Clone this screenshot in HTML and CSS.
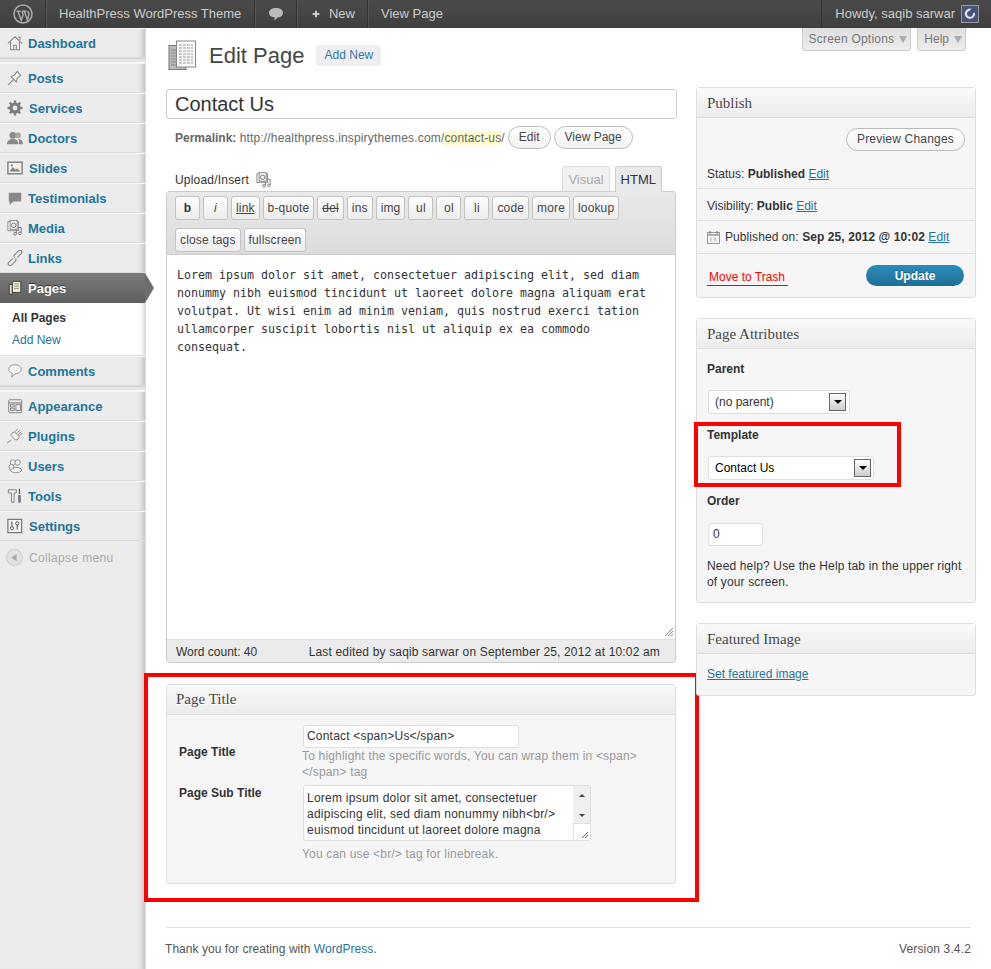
FILE: index.html
```html
<!DOCTYPE html>
<html lang="en">
<head>
<meta charset="utf-8">
<title>Edit Page</title>
<link rel="stylesheet" href="styles.css">
</head>
<body>
<header class="adminbar">
  <div class="ab-item ab-logo">
    <svg width="20" height="20" viewBox="0 0 20 20"><circle cx="10" cy="10" r="9" fill="none" stroke="#aaa" stroke-width="1.6"/><path d="M3.4 7.2h4.2M5 7.2l3.2 9 2-5.6-1.3-3.4M9 7.2h4.6M11.3 7.2l3 8.6 1.6-5c.5-1.6-.6-3-1.6-3" fill="none" stroke="#aaa" stroke-width="1.5"/></svg>
  </div>
  <div class="ab-item ab-site">HealthPress WordPress Theme</div>
  <div class="ab-item ab-icon">
    <svg width="16" height="14" viewBox="0 0 16 14"><path d="M8 1c4 0 7 1.900 7 4.800S12.500 10.500 9.500 10.500c-.8 1.300-2 2.500-3.500 2.700.6-.8.8-1.600.8-2.800C3.500 10.200 1 8.600 1 5.800S4 1 8 1z" fill="#bbb"/></svg>
  </div>
  <div class="ab-item ab-new">
    <svg width="12" height="12" viewBox="0 0 12 12"><path d="M6 1v10M1 6h10" stroke="#ccc" stroke-width="3"/></svg>
    <span>New</span>
  </div>
  <div class="ab-item ab-last">View Page</div>
  <div class="ab-item ab-user">
    <span>Howdy, saqib sarwar</span>
    <span class="avatar"><svg width="16" height="16" viewBox="0 0 16 16"><rect width="16" height="16" fill="#46547c"/><path d="M8 2.500a5.200 5.200 0 1 0 5 4l-2.200 1a2.900 2.900 0 1 1-3.500-2.400L9.500 2.700z" fill="#dfe3ee"/></svg></span>
  </div>
</header>

<div class="shell">
  <nav class="sidebar">
    <a class="item"><svg class="mi" viewBox="0 0 18 18"><path d="M1 9.500 9 2l8 7.500M4 8v8.500h10V8M7.500 16.500v-5h3v5M12.500 2.500h2v3" fill="#f4f4f4" stroke="#888" stroke-width="1.200"/></svg><span>Dashboard</span></a>
    <div class="sep"></div>
    <a class="item"><svg class="mi" viewBox="0 0 18 18"><path d="M1 17l6-6" stroke="#888" stroke-width="1.200"/><path d="M4.500 7.500l6 6 1-4.500 4-3-4-4.500-3 4z" fill="#f4f4f4" stroke="#888" stroke-width="1.200"/></svg><span>Posts</span></a>
    <a class="item"><svg class="mi mi-w" viewBox="0 0 18 18"><circle cx="9" cy="9" r="4.500" fill="none" stroke="#7d7d7d" stroke-width="3.600"/><path d="M9 .6v16.800M.6 9h16.800M3 3l12 12M15 3 3 15" stroke="#7d7d7d" stroke-width="2.600" stroke-dasharray="3 10.800"/></svg><span>Services</span></a>
    <a class="item"><svg class="mi" viewBox="0 0 18 18"><circle cx="6.500" cy="6" r="3.800" fill="#8a8a8a"/><circle cx="12.500" cy="6" r="3.200" fill="#a5a5a5"/><path d="M0 16c0-4.500 3-6 6.500-6s6.500 1.500 6.500 6zM13.500 16H18c0-3.500-2-6-5.500-6 1.200 1.200 1.500 4 1 6z" fill="#8a8a8a"/></svg><span>Doctors</span></a>
    <a class="item"><svg class="mi mi-w" viewBox="0 0 18 18"><rect x="1" y="2.500" width="16" height="13" fill="#f0f0f0" stroke="#808080" stroke-width="1.600"/><path d="M3 13l3.500-5 3 3 2-1.500 3.500 3.500z" fill="#808080"/><circle cx="5.500" cy="6" r="1.300" fill="#808080"/></svg><span>Slides</span></a>
    <a class="item"><svg class="mi" viewBox="0 0 18 18"><path d="M2 3h14v10H7l-4 4v-4H2z" fill="#888"/></svg><span>Testimonials</span></a>
    <a class="item"><svg class="mi" viewBox="0 0 18 18"><use href="#media"/></svg><span>Media</span></a>
    <a class="item"><svg class="mi" viewBox="0 0 18 18"><path d="M6.500 9.500 2 14c-1 1-1 2 0 3s2 1 3 0l4.500-4.500c1-1 1-2 0-3M11.500 8.500 16 4c1-1 1-2 0-3s-2-1-3 0L8.500 5.500c-1 1-1 2 0 3" fill="none" stroke="#888" stroke-width="1.300"/></svg><span>Links</span></a>
    <div class="current">
      <a class="item item-on"><svg class="mi" viewBox="0 0 18 18"><path d="M2.500 5H6v11H2.500z" fill="#e9dfb8" stroke="#333"/><path d="M6 1.500h9.500V14H6z" fill="#f3ecc8" stroke="#333"/><path d="M8 4.500h5.500M8 7h5.500M8 9.500h5.500" stroke="#888"/></svg><span>Pages</span></a>
      <div class="sub">
        <a class="sub-on">All Pages</a>
        <a>Add New</a>
      </div>
    </div>
    <a class="item"><svg class="mi" viewBox="0 0 18 18"><path d="M9 2c4 0 7 2 7 5s-3 5-7 5l-3.500 4 .5-4.300C3.500 11 2 9.200 2 7c0-3 3-5 7-5z" fill="#f6f6f6" stroke="#888"/></svg><span>Comments</span></a>
    <div class="sep"></div>
    <a class="item"><svg class="mi" viewBox="0 0 18 18"><rect x="2" y="2" width="14.500" height="14.500" rx="1" fill="#f2f2f2" stroke="#777"/><path d="M2 5.500h14.500" stroke="#777" stroke-width="1.200"/><rect x="4" y="7.500" width="4" height="2.500" fill="none" stroke="#777"/><rect x="4" y="11.500" width="4" height="2.500" fill="none" stroke="#777"/><rect x="10" y="7.500" width="5" height="6.500" fill="none" stroke="#777"/></svg><span>Appearance</span></a>
    <a class="item"><svg class="mi" viewBox="0 0 18 18"><path d="M0 17l5-3.500" stroke="#888" stroke-width="1.100"/><path d="M4.500 8.500l5 5c2.500 0 4-1.500 4.500-3.500L8.500 4.500C6 5 4.500 6.500 4.500 8.500zM9 4l3-3M14 9l3-3M11 6l3.500-3.500M12.500 7.500l3.500-3.500" fill="#eee" stroke="#888" stroke-width="1.100"/></svg><span>Plugins</span></a>
    <a class="item"><svg class="mi" viewBox="0 0 18 18"><circle cx="6.500" cy="5" r="3" fill="#f4f4f4" stroke="#888"/><circle cx="12" cy="5" r="3" fill="#f4f4f4" stroke="#888"/><ellipse cx="10" cy="13.500" rx="6.500" ry="3" fill="#f4f4f4" stroke="#888"/><circle cx="5" cy="10" r="2.800" fill="#f4f4f4" stroke="#888"/></svg><span>Users</span></a>
    <a class="item"><svg class="mi" viewBox="0 0 18 18"><path d="M1.500 2h9v3.500H8V16H5V5.500H1.500z" fill="#efefef" stroke="#777"/><path d="M14 1v6" stroke="#555" stroke-width="1.400"/><rect x="12.500" y="8" width="3" height="8.500" rx="1" fill="#777"/></svg><span>Tools</span></a>
    <a class="item"><svg class="mi mi-w" viewBox="0 0 18 18"><rect x="1" y="1.500" width="15.500" height="15" fill="#f2f2f2" stroke="#666" stroke-width="1.200"/><path d="M5.500 4v9M11.500 4v9" stroke="#555" stroke-width="1.200"/><circle cx="5.500" cy="11.500" r="1.800" fill="#f2f2f2" stroke="#555"/><circle cx="11.500" cy="6" r="1.800" fill="#f2f2f2" stroke="#555"/></svg><span>Settings</span></a>
    <a class="collapse">
      <svg class="ci" viewBox="0 0 16 16"><circle cx="8" cy="8" r="7.500" fill="#e2e2e2" stroke="#ccc"/><path d="M10 4.500v7L5 8z" fill="#aaa"/></svg>
      <span>Collapse menu</span>
    </a>
  </nav>

  <main class="content">
    <div class="head">
      <svg class="page-icon" width="30" height="32" viewBox="0 0 30 32"><rect x="1" y="5.500" width="17" height="24" fill="#bbb" stroke="#777"/><path d="M3 10h5M3 13h5M3 16h5M3 19h5M3 22h5M3 25h5" stroke="#888"/><rect x="8.500" y="1" width="19" height="26" fill="#fbfbfb" stroke="#888"/><path d="M11 5h14M11 8h14M11 11h14M11 14h14M11 17h14M11 20h14M11 23h14" stroke="#999" stroke-dasharray="3 1"/></svg>
      <h1>Edit Page</h1>
      <a class="add-new">Add New</a>
      <div class="tabs">
        <a class="tab">Screen Options <i class="tri"></i></a>
        <a class="tab">Help <i class="tri"></i></a>
      </div>
    </div>

    <div class="columns">
      <div class="col-main">
        <div class="title-input">Contact Us</div>
        <div class="permalink">
          <b>Permalink:</b>&nbsp;<span class="url">http://healthpress.inspirythemes.com/<mark>contact-us</mark>/</span>
          <a class="pill">Edit</a>
          <a class="pill">View Page</a>
        </div>

        <div class="editor-top">
          <div class="upload">Upload/Insert <svg width="16" height="16" viewBox="0 0 18 18"><use href="#media"/></svg></div>
          <div class="editor-tabs">
            <a class="etab">Visual</a>
            <a class="etab etab-on">HTML</a>
          </div>
        </div>
        <div class="editor">
          <div class="toolbar">
            <a class="qt"><b>b</b></a><a class="qt"><i>i</i></a><a class="qt"><u>link</u></a><a class="qt">b-quote</a><a class="qt"><s>del</s></a><a class="qt">ins</a><a class="qt">img</a><a class="qt">ul</a><a class="qt">ol</a><a class="qt">li</a><a class="qt">code</a><a class="qt">more</a><a class="qt">lookup</a><a class="qt">close tags</a><a class="qt">fullscreen</a>
          </div>
          <div class="editor-text">
            <p>Lorem ipsum dolor sit amet, consectetuer adipiscing elit, sed diam<br>nonummy nibh euismod tincidunt ut laoreet dolore magna aliquam erat<br>volutpat. Ut wisi enim ad minim veniam, quis nostrud exerci tation<br>ullamcorper suscipit lobortis nisl ut aliquip ex ea commodo<br>consequat.</p>
            <svg class="grip" width="10" height="10" viewBox="0 0 10 10"><path d="M9 1 1 9M9 4 4 9M9 7 7 9" stroke="#888"/></svg>
          </div>
          <div class="wordcount">
            <span>Word count: 40</span>
            <span class="edited">Last edited by saqib sarwar on September 25, 2012 at 10:02 am</span>
          </div>
        </div>

        <section class="box box-title">
          <h3>Page Title</h3>
          <div class="meta">
            <div class="meta-row">
              <label>Page Title</label>
              <div class="meta-field">
                <div class="text-field">Contact &lt;span&gt;Us&lt;/span&gt;</div>
                <p class="hint">To highlight the specific words, You can wrap them in &lt;span&gt;<br>&lt;/span&gt; tag</p>
              </div>
            </div>
            <div class="meta-row">
              <label class="label-top">Page Sub Title</label>
              <div class="meta-field">
                <div class="area">
                  <div class="area-text">Lorem ipsum dolor sit amet, consectetuer<br>adipiscing elit, sed diam nonummy nibh&lt;br/&gt;<br>euismod tincidunt ut laoreet dolore magna</div>
                  <div class="scroll">
                    <div class="scroll-track"><i class="up"></i><i class="down"></i></div>
                    <div class="scroll-corner"><svg width="8" height="8" viewBox="0 0 8 8"><path d="M7 1 1 7M7 4 4 7" stroke="#666"/></svg></div>
                  </div>
                </div>
                <p class="hint hint-sub">You can use &lt;br/&gt; tag for linebreak.</p>
              </div>
            </div>
          </div>
          <div class="ring ring-big"></div>
        </section>
      </div>

      <aside class="col-side">
        <section class="box">
          <h3>Publish</h3>
          <div class="pub-preview"><a class="pill pill-wide">Preview Changes</a></div>
          <div class="pub-row pub-status">Status: <b>Published</b> <a class="lnk">Edit</a></div>
          <div class="pub-row">Visibility: <b>Public</b> <a class="lnk">Edit</a></div>
          <div class="pub-row pub-date">
            <svg width="13" height="13" viewBox="0 0 13 13"><rect x=".5" y="1.500" width="12" height="11" fill="#f4f4f4" stroke="#999"/><path d="M.5 4h12" stroke="#999" stroke-width="1.500"/><path d="M3 0v3M10 0v3" stroke="#777"/><path d="M4 6.500v4M8 6.500v4" stroke="#aaa"/></svg>
            <span class="pub-when">Published on: <b>Sep 25, 2012 @ 10:02</b> <a class="lnk">Edit</a></span>
          </div>
          <div class="pub-actions">
            <a class="trash">Move to Trash</a>
            <a class="update">Update</a>
          </div>
        </section>

        <section class="box">
          <h3>Page Attributes</h3>
          <div class="attrs">
            <p class="attr-label">Parent</p>
            <div class="select select-parent"><span>(no parent)</span><i class="sel-btn"></i></div>
            <div class="tpl">
              <p class="attr-label">Template</p>
              <div class="select select-tpl"><span>Contact Us</span><i class="sel-btn"></i></div>
              <div class="ring ring-tpl"></div>
            </div>
            <p class="attr-label">Order</p>
            <div class="order">0</div>
            <p class="attr-help">Need help? Use the Help tab in the upper right of your screen.</p>
          </div>
        </section>

        <section class="box">
          <h3>Featured Image</h3>
          <div class="feat"><a class="lnk">Set featured image</a></div>
        </section>
      </aside>
    </div>

    <footer class="foot">
      <span class="foot-thanks">Thank you for creating with <a class="plain">WordPress</a>.</span>
      <span class="foot-version">Version 3.4.2</span>
    </footer>
  </main>
</div>

<svg class="defs" width="0" height="0"><defs><symbol id="media" viewBox="0 0 18 18"><rect x="1" y="2" width="12" height="10" fill="#f3f3f3" stroke="#888"/><rect x="3.500" y="0.500" width="8" height="10" fill="#eee" stroke="#888"/><circle cx="7.500" cy="6" r="2.500" fill="none" stroke="#777"/><path d="M13 8.500h3v6M10.500 11v4" fill="none" stroke="#777"/><circle cx="9" cy="15.500" r="1.500" fill="none" stroke="#777"/><circle cx="14.500" cy="15" r="1.500" fill="none" stroke="#777"/></symbol></defs></svg>
</body>
</html>
```

FILE: styles.css
```css
* { box-sizing: border-box; }
html, body { margin: 0; padding: 0; }
body {
  font: 12px/18px "Liberation Sans", Arial, sans-serif;
  color: #333;
  background: #fff;
  width: 991px;
  height: 969px;
  overflow: hidden;
}
p, h1, h3 { margin: 0; }
a { text-decoration: none; }

/* admin bar */
.adminbar {
  display: flex;
  height: 28px;
  background: linear-gradient(#4a4a4a, #3f3f3f);
  color: #ccc;
  font-size: 13px;
  white-space: nowrap;
}
.ab-item {
  display: flex;
  align-items: center;
  gap: 7px;
  height: 28px;
  padding: 0 12px;
  border-right: 1px solid #333;
  border-left: 1px solid #555;
}
.ab-item:first-child { border-left: 0; }
.ab-logo { width: 46px; padding: 0 0 0 13px; }
.ab-site { width: 209px; }
.ab-icon { width: 42px; }
.ab-new { width: 71px; padding-left: 14px; gap: 9px; }
.ab-last { border-right: 0; }
.ab-user { margin-left: auto; border-left: 1px solid #333; border-right: 0; padding: 0 12px 0 13px; gap: 6px; }
.avatar {
  display: flex;
  width: 18px;
  height: 18px;
  border: 1px solid #999;
}

/* shell */
.shell { display: flex; height: 941px; }
.sidebar {
  flex: none;
  width: 146px;
  background: #ececec;
  box-shadow: inset -7px 0 6px -5px #bbb;
  border-right: 1px solid #ddd;
}
.item {
  display: flex;
  align-items: center;
  gap: 5px;
  height: 30px;
  padding: 2px 0 0 7px;
  font-size: 13px;
  font-weight: bold;
  color: #21759b;
  border-top: 1px solid #f6f6f6;
  border-bottom: 1px solid #dcdcdc;
}
.mi { width: 16px; height: 16px; flex: none; margin-top: -2px; }
.mi-w { margin-right: 1px; }
.sep {
  height: 5px;
  background: #e4e4e4;
  border-top: 1px solid #d4d4d4;
  border-bottom: 1px solid #f8f8f8;
}
.current { position: relative; }
.item-on {
  position: relative;
  color: #fff;
  width: 145px;
  background: linear-gradient(#7a7a7a, #5f5f5f);
  border: 0;
  text-shadow: 0 -1px 0 #333;
}
.item-on::after {
  content: "";
  position: absolute;
  left: 145px;
  top: 0;
  border-left: 9px solid #6d6d6d;
  border-top: 15px solid transparent;
  border-bottom: 15px solid transparent;
}
.sub {
  display: flex;
  flex-direction: column;
  width: 145px;
  height: 53px;
  padding: 4px 0 0 12px;
  background: #fff;
  border-bottom: 1px solid #dcdcdc;
  box-shadow: inset -5px 0 5px -4px #ccc;
  color: #21759b;
  line-height: 22px;
}
.sub-on { font-weight: bold; color: #333; }
.collapse {
  display: flex;
  align-items: center;
  gap: 6px;
  height: 32px;
  padding: 2px 0 0 6px;
  color: #aaa;
  letter-spacing: .35px;
}
.ci { width: 17px; height: 17px; margin-top: -2px; }

/* content */
.content {
  flex: none;
  width: 845px;
  padding-left: 20px;
}
.head {
  display: flex;
  align-items: flex-start;
  height: 61px;
}
.page-icon { margin: 12px 0 0 2px; }
h1 {
  margin: 14px 0 0 11px;
  font-size: 22px;
  font-weight: normal;
  line-height: 28px;
  color: #464646;
}
.add-new {
  margin: 17px 0 0 12px;
  width: 65px;
  height: 21px;
  line-height: 21px;
  text-align: center;
  background: #efefef;
  border-radius: 3px;
  color: #2e7ca6;
}
.tabs {
  display: flex;
  gap: 6px;
  margin-left: auto;
  margin-right: 25px;
}
.tab {
  display: flex;
  align-items: center;
  gap: 5px;
  height: 23px;
  padding: 0 3px 0 6px;
  background: linear-gradient(#dfdfdf, #ececec);
  border: 1px solid #ccc;
  border-top: 0;
  border-radius: 0 0 4px 4px;
  color: #777;
  letter-spacing: .22px;
}
.tab:last-child { letter-spacing: 0; }
.tri {
  border-top: 7px solid #aaa;
  border-left: 4px solid transparent;
  border-right: 4px solid transparent;
}
.columns {
  display: flex;
  gap: 19px;
  width: 810px;
}
.col-main { width: 511px; flex: none; }
.col-side { width: 280px; flex: none; margin-top: -2px; }

.title-input {
  height: 30px;
  padding-left: 8px;
  font-size: 20px;
  line-height: 28px;
  color: #333;
  border: 1px solid #ccc;
  border-radius: 3px;
  background: #fff;
}
.permalink {
  display: flex;
  align-items: center;
  height: 23px;
  margin-top: 7px;
  padding-left: 9px;
  color: #666;
}
.url { letter-spacing: .16px; }
mark { background: #fffbcc; color: #666; }
.pill {
  display: inline-block;
  height: 23px;
  line-height: 21px;
  padding: 0 10px;
  margin-left: 3px;
  border: 1px solid #bbb;
  border-radius: 12px;
  background: linear-gradient(#fff, #f2f2f2);
  color: #464646;
}
.editor-top {
  display: flex;
  justify-content: space-between;
  align-items: flex-end;
  height: 42px;
}
.upload {
  display: flex;
  align-items: center;
  gap: 7px;
  padding: 0 0 2px 9px;
  letter-spacing: .2px;
}
.editor-tabs {
  display: flex;
  gap: 5px;
  margin-right: 15px;
}
.etab {
  height: 25px;
  padding: 4px 5px 0;
  border: 1px solid #ddd;
  border-bottom: 0;
  border-radius: 3px 3px 0 0;
  background: #f1f1f1;
  color: #aaa;
  font-size: 13px;
}
.etab-on {
  position: relative;
  height: 26px;
  margin-bottom: -1px;
  background: #e9e9e9;
  border-color: #ccc;
  color: #333;
  z-index: 1;
}
.editor {
  width: 510px;
  border: 1px solid #ccc;
  border-radius: 3px;
}
.toolbar {
  display: flex;
  flex-wrap: wrap;
  gap: 6px 3px;
  height: 63px;
  padding: 4px 50px 0 8px;
  background: linear-gradient(#e9e9e9, #dcdcdc);
  border-bottom: 1px solid #ccc;
}
.qt {
  min-width: 25px;
  height: 24px;
  padding: 0 4px;
  line-height: 22px;
  text-align: center;
  border: 1px solid #c3c3c3;
  border-radius: 3px;
  background: linear-gradient(#fefefe, #ececec);
  color: #464646;
  letter-spacing: .15px;
}
.qt b { color: #333; }
.editor-text {
  position: relative;
  height: 384px;
  padding: 11px 10px;
  background: #fff;
  font: 11.630px/18px "DejaVu Sans Mono", "Liberation Mono", monospace;
  color: #333;
}
.grip { position: absolute; right: 1px; bottom: 2px; }
.wordcount {
  display: flex;
  justify-content: space-between;
  height: 23px;
  padding: 3px 15px 0 9px;
  background: #ebebeb;
  color: #333;
  border-top: 1px solid #dfdfdf;
}
.edited { letter-spacing: .16px; }

/* boxes */
.box {
  position: relative;
  margin-bottom: 20px;
  background: #f6f6f6;
  border: 1px solid #dfdfdf;
  border-radius: 3px;
}
.box-title {
  width: 510px;
  height: 200px;
  margin: 21px 0 0;
}
.box h3 {
  height: 30px;
  padding: 1px 9px 0 10px;
  font: normal 15px/28px "Liberation Serif", serif;
  color: #464646;
  background: linear-gradient(#f9f9f9, #ececec);
  border-bottom: 1px solid #dfdfdf;
  text-shadow: 0 1px 0 #fff;
}
.box-title h3 { padding: 0 0 0 9px; }
.pub-preview {
  display: flex;
  justify-content: flex-end;
  padding: 10px 10px 0 0;
}
.pill-wide { padding: 0 10px; margin: 0; letter-spacing: .2px; }
.pub-row {
  padding: 8px 10px 0;
  height: 32px;
  border-bottom: 1px solid #dfdfdf;
}
.pub-status { height: 38px; padding-top: 14px; }
.pub-date {
  display: flex;
  align-items: center;
  gap: 5px;
  height: 33px;
  padding: 0 10px;
}
.pub-when { letter-spacing: .08px; }
.lnk { color: #21759b; text-decoration: underline; }
.pub-actions {
  display: flex;
  justify-content: space-between;
  height: 43px;
  padding: 11px 11px 0 10px;
}
.trash {
  align-self: flex-start;
  height: 18px;
  margin-top: 3px;
  padding: 0 3px 0 2px;
  color: #f00;
  border-bottom: 1px solid #f00;
}
.update {
  width: 98px;
  height: 21px;
  line-height: 22px;
  text-align: center;
  font-weight: bold;
  color: #fff;
  border-radius: 11px;
  background: linear-gradient(#2a8cbb, #1f6f95);
  text-shadow: 0 -1px 0 rgba(0,0,0,.3);
}

.attrs { padding: 11px 10px 0; height: 253px; }
.attr-label { font-weight: bold; height: 18px; }
.select {
  display: flex;
  align-items: center;
  justify-content: space-between;
  height: 24px;
  margin: 12px 0 12px 1px;
  padding: 0 2px 0 6px;
  background: #fff;
  border: 1px solid #dfdfdf;
  border-radius: 3px;
}
.select-parent { width: 142px; padding-right: 3px; }
.select-tpl { width: 166px; color: #000; }
.sel-btn {
  display: flex;
  align-items: center;
  justify-content: center;
  width: 17px;
  height: 18px;
  border: 1px solid #666;
  background: linear-gradient(#fff, #ccc);
}
.sel-btn::before {
  content: "";
  border-top: 4px solid #000;
  border-left: 4px solid transparent;
  border-right: 4px solid transparent;
}
.tpl { position: relative; }
.ring {
  position: absolute;
  border: 4px solid #f00;
  pointer-events: none;
}
.ring-tpl { left: -13px; top: -4px; width: 207px; height: 65px; }
.ring-big { left: -23px; top: -12px; width: 555px; height: 229px; }
.order {
  width: 55px;
  height: 23px;
  margin: 13px 0 12px 1px;
  padding-left: 4px;
  line-height: 21px;
  background: #fff;
  border: 1px solid #dfdfdf;
  border-radius: 3px;
  color: #333;
}
.attr-help { line-height: 16px; color: #333; letter-spacing: .15px; }
.feat { height: 41px; padding: 11px 10px 0; }

/* meta box */
.meta { padding: 10px 0 0 12px; }
.meta-row { display: flex; }
.meta-row label {
  flex: none;
  width: 124px;
  font-weight: bold;
  padding-top: 18px;
}
.meta-row .label-top { padding-top: 0; margin-top: -1px; }
.meta-field { flex: none; width: 360px; }
.text-field {
  width: 216px;
  height: 23px;
  padding-left: 3px;
  line-height: 20px;
  letter-spacing: .2px;
  background: #fff;
  border: 1px solid #dfdfdf;
  border-radius: 3px;
}
.hint {
  margin: 0 0 5px -1px;
  color: #999;
  line-height: 16px;
  width: 350px;
  letter-spacing: .18px;
}
.hint-sub { margin-top: 5px; }
.area {
  display: flex;
  width: 288px;
  height: 56px;
  background: #fff;
  border: 1px solid #dfdfdf;
  border-radius: 3px;
  overflow: hidden;
}
.area-text {
  flex: 1;
  padding: 4px 3px;
  line-height: 16px;
  letter-spacing: .25px;
  white-space: nowrap;
}
.scroll {
  flex: none;
  display: flex;
  flex-direction: column;
  width: 17px;
}
.scroll-track {
  flex: 1;
  display: flex;
  flex-direction: column;
  justify-content: space-between;
  align-items: center;
  padding: 8px 0 6px;
  background: #efefef;
}
.up { border-bottom: 3px solid #444; border-left: 3px solid transparent; border-right: 3px solid transparent; }
.down { border-top: 3px solid #444; border-left: 3px solid transparent; border-right: 3px solid transparent; }
.scroll-corner {
  height: 17px;
  display: flex;
  justify-content: flex-end;
  align-items: flex-end;
  background: #fff;
  border-left: 1px solid #dfdfdf;
  border-top: 1px solid #dfdfdf;
  padding: 0 1px 1px 0;
}

/* footer */
.foot {
  display: flex;
  justify-content: space-between;
  width: 805px;
  margin-top: 43px;
  padding-top: 12px;
  border-top: 1px solid #dfdfdf;
  color: #555;
}
.foot-thanks { margin-left: -1px; letter-spacing: .05px; }
.foot-version { letter-spacing: .15px; }
.plain { color: #21759b; }
.defs { position: absolute; }
```
